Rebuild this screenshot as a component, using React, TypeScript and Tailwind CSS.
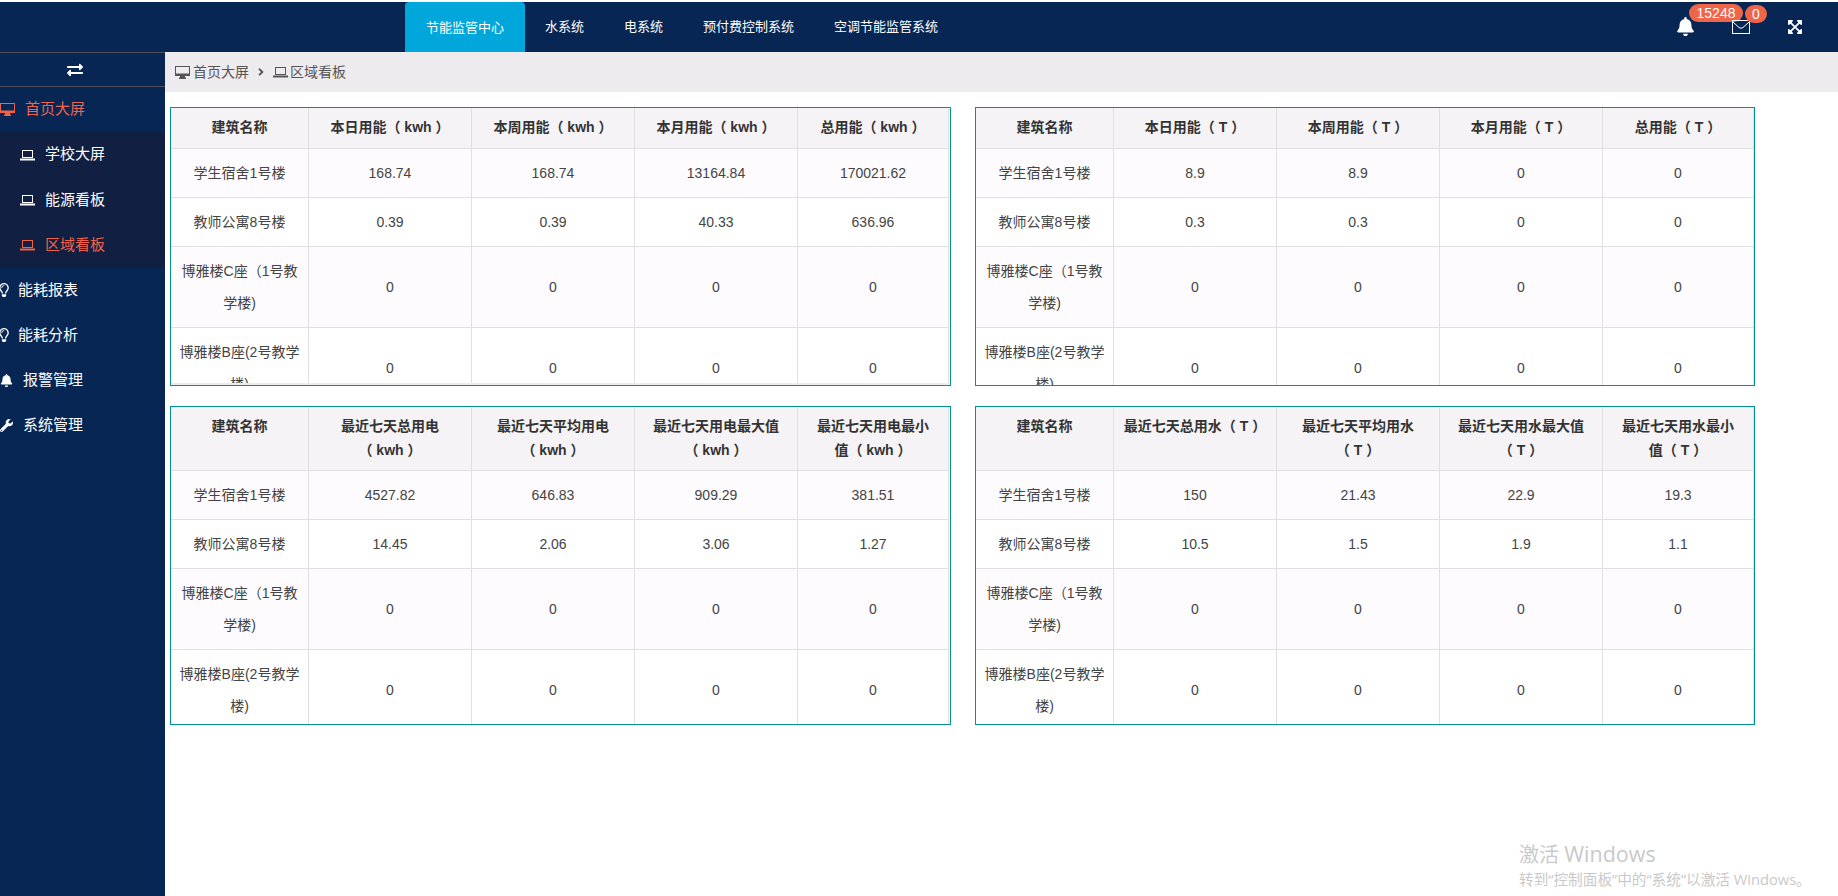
import { ReactNode } from "react";
import { FaAngleRight, FaBell, FaExchangeAlt, FaExpandArrowsAlt, FaRegLightbulb, FaWrench } from "react-icons/fa";

const buildings = [
  "学生宿舍1号楼",
  "教师公寓8号楼",
  "博雅楼C座（1号教学楼)",
  "博雅楼B座(2号教学楼)",
];

const zero = ["0", "0", "0", "0"];

function rowsFrom(first: string[], second: string[]) {
  return [first, second, zero, zero];
}

// unit in brackets, never split across lines
function Unit({ u }: { u: string }) {
  return <span className="whitespace-nowrap">（{"\u00a0" + u + "\u00a0"}）</span>;
}

function LaptopIcon({ className }: { className: string }) {
  return (
    <svg viewBox="0 0 15 12" className={className} fill="currentColor">
      <path d="M2 1h11v8h-11zM3 2v6h9v-6z" fillRule="evenodd" />
      <rect x="0" y="9.5" width="15" height="2" />
    </svg>
  );
}

function DesktopIcon({ className }: { className: string }) {
  return (
    <svg viewBox="0 0 15 13" className={className} fill="currentColor">
      <path d="M0 0h15v10h-15zM1 1v6.5h13v-6.5z" fillRule="evenodd" />
      <rect x="5" y="10" width="5" height="2" />
      <rect x="4" y="11.5" width="7" height="1.5" />
    </svg>
  );
}

function MailIcon() {
  return (
    <svg viewBox="0 0 18 14" className="h-[14px] w-[18px]" fill="none" stroke="currentColor">
      <rect x="0.5" y="0.5" width="17" height="13" />
      <path d="M1 2l6 5.5q2 1.5 4 0l6-5.5" />
    </svg>
  );
}

function DataTable({
  heads,
  rows,
  clipped,
  right,
  rule,
}: {
  heads: ReactNode[];
  rows: string[][];
  clipped?: boolean;
  right?: boolean;
  rule?: boolean;
}) {
  return (
    <div
      className={`border border-[#009490] ${clipped ? "h-[279px]" : "h-[319px]"} ${
        right ? "w-[780px]" : "w-[781px]"
      }`}
    >
      <div className={`h-full overflow-hidden ${rule ? "border-b-2 border-[#ececec]" : ""}`}>
        <table className="w-[778px] table-fixed border-separate border-spacing-0 text-center text-sm text-[#444]">
          <colgroup>
            <col className="w-[138px]" />
            <col className="w-[163px]" />
            <col className="w-[163px]" />
            <col className="w-[163px]" />
            <col className="w-[151px]" />
          </colgroup>
          <thead>
            <tr>
              <th className="border-r border-b border-[#e0e0e0] bg-[#f5f3f6] p-2 align-top leading-[23.5px] font-bold text-[#333]">
                建筑名称
              </th>
              {heads.map((h, i) => (
                <th
                  key={i}
                  className="border-r border-b border-[#e0e0e0] bg-[#f5f3f6] p-2 align-top leading-[23.5px] font-bold text-[#333]"
                >
                  {h}
                </th>
              ))}
            </tr>
          </thead>
          <tbody>
            {buildings.map((name, r) => (
              <tr key={name} className="odd:bg-[#fdfbfe] even:bg-white">
                <td className="border-r border-b border-[#e0e0e0] p-2 align-middle leading-8">{name}</td>
                {rows[r].map((v, c) => (
                  <td key={c} className="border-r border-b border-[#e0e0e0] p-2 align-middle leading-8">
                    {v}
                  </td>
                ))}
              </tr>
            ))}
          </tbody>
        </table>
      </div>
    </div>
  );
}

function SideItem({
  icon,
  label,
  active,
  sub,
}: {
  icon: ReactNode;
  label: string;
  active?: boolean;
  sub?: boolean;
}) {
  return (
    <div
      className={`flex items-center text-[15px] ${active ? "text-[#f0634a]" : "text-white"} ${
        sub ? "h-[45.33px] pl-5" : "h-[45px]"
      }`}
    >
      {icon}
      {label}
    </div>
  );
}

export default function App() {
  const laptop = <LaptopIcon className="mr-[10px] h-3 w-[15px] shrink-0" />;
  const bulb = <FaRegLightbulb className="mr-[7px] -ml-[3px] size-[14px] shrink-0" />;

  return (
    <div className="relative flex h-screen flex-col overflow-hidden bg-white pt-[2px] font-['Liberation_Sans','Noto_Sans_CJK_SC',sans-serif] [text-spacing-trim:space-all]">
      {/* Top bar */}
      <header className="flex h-[50px] shrink-0 items-start bg-[#082654] text-[13px] text-white">
        <nav className="ml-[405px] flex">
          <a className="flex h-[51px] items-center rounded-t bg-[#01a7da] px-[21px]">节能监管中心</a>
          <a className="flex h-[50px] items-center px-5">水系统</a>
          <a className="flex h-[50px] items-center px-5">电系统</a>
          <a className="flex h-[50px] items-center px-5">预付费控制系统</a>
          <a className="flex h-[50px] items-center px-5">空调节能监管系统</a>
        </nav>
        <div className="ml-auto flex items-center pt-[15px] pr-[35px]">
          <div className="relative mr-[37px]">
            <FaBell className="size-[19px]" />
            <span className="absolute -top-[13px] left-[13px] flex h-[18px] w-[54px] items-center justify-center rounded-full bg-[#ee6549] text-sm">
              15248
            </span>
          </div>
          <div className="relative mr-[37px]">
            <MailIcon />
            <span className="absolute -top-[15px] left-[13px] flex h-[18px] w-[22px] items-center justify-center rounded-full bg-[#ee6549] text-sm">
              0
            </span>
          </div>
          <FaExpandArrowsAlt className="size-4" />
        </div>
      </header>

      <div className="flex min-h-0 flex-1">
        {/* Sidebar */}
        <aside className="w-[165px] shrink-0 overflow-hidden bg-[#082654]">
          <div className="flex h-[35px] items-center justify-center border-y border-[#4b5058] pr-[16px] text-white">
            <FaExchangeAlt className="size-4" />
          </div>
          <SideItem active icon={<DesktopIcon className="mr-[10px] h-[13px] w-[15px] shrink-0" />} label="首页大屏" />
          <div className="bg-[#101f42]">
            <SideItem sub icon={laptop} label="学校大屏" />
            <SideItem sub icon={laptop} label="能源看板" />
            <SideItem sub active icon={laptop} label="区域看板" />
          </div>
          <SideItem icon={bulb} label="能耗报表" />
          <SideItem icon={bulb} label="能耗分析" />
          <SideItem icon={<FaBell className="mr-[10px] size-[13px]" />} label="报警管理" />
          <SideItem icon={<FaWrench className="mr-[10px] size-[13px]" />} label="系统管理" />
        </aside>

        {/* Main */}
        <main className="min-w-0 flex-1">
          <div className="flex h-10 items-center gap-[3px] bg-[#eeebee] pl-[10px] text-sm text-[#555]">
            <DesktopIcon className="h-[13px] w-[15px]" />
            <span>首页大屏</span>
            <FaAngleRight className="mx-[3px] size-3" />
            <LaptopIcon className="h-3 w-[15px]" />
            <span className="-ml-px">区域看板</span>
          </div>
          <div className="flex flex-col gap-[20px] pt-[15px] pl-[5px]">
            <div className="flex gap-6">
              <DataTable
                clipped
                rule
                heads={[
                  <>本日用能<Unit u="kwh" /></>,
                  <>本周用能<Unit u="kwh" /></>,
                  <>本月用能<Unit u="kwh" /></>,
                  <>总用能<Unit u="kwh" /></>,
                ]}
                rows={rowsFrom(
                  ["168.74", "168.74", "13164.84", "170021.62"],
                  ["0.39", "0.39", "40.33", "636.96"],
                )}
              />
              <DataTable
                clipped
                right
                heads={[
                  <>本日用能<Unit u="T" /></>,
                  <>本周用能<Unit u="T" /></>,
                  <>本月用能<Unit u="T" /></>,
                  <>总用能<Unit u="T" /></>,
                ]}
                rows={rowsFrom(["8.9", "8.9", "0", "0"], ["0.3", "0.3", "0", "0"])}
              />
            </div>
            <div className="flex gap-6">
              <DataTable
                heads={[
                  <>最近七天总用电<Unit u="kwh" /></>,
                  <>最近七天平均用电<Unit u="kwh" /></>,
                  <>最近七天用电最大值<Unit u="kwh" /></>,
                  <>最近七天用电最小<br />值<Unit u="kwh" /></>,
                ]}
                rows={rowsFrom(
                  ["4527.82", "646.83", "909.29", "381.51"],
                  ["14.45", "2.06", "3.06", "1.27"],
                )}
              />
              <DataTable
                right
                heads={[
                  <>最近七天总用水<Unit u="T" /></>,
                  <>最近七天平均用水<Unit u="T" /></>,
                  <>最近七天用水最大值<Unit u="T" /></>,
                  <>最近七天用水最小<br />值<Unit u="T" /></>,
                ]}
                rows={rowsFrom(["150", "21.43", "22.9", "19.3"], ["10.5", "1.5", "1.9", "1.1"])}
              />
            </div>
          </div>
        </main>
      </div>

      {/* Windows activation watermark */}
      <div className="pointer-events-none absolute top-[840px] left-[1519px] font-['Open_Sans','Noto_Sans_CJK_SC',sans-serif] whitespace-nowrap text-[#c9c9c9]">
        <div className="text-xl leading-7">
          激活 <span className="text-[21.5px]">Windows</span>
        </div>
        <div className="text-[14.67px] leading-5">转到“控制面板”中的“系统”以激活 Windows。</div>
      </div>
    </div>
  );
}
